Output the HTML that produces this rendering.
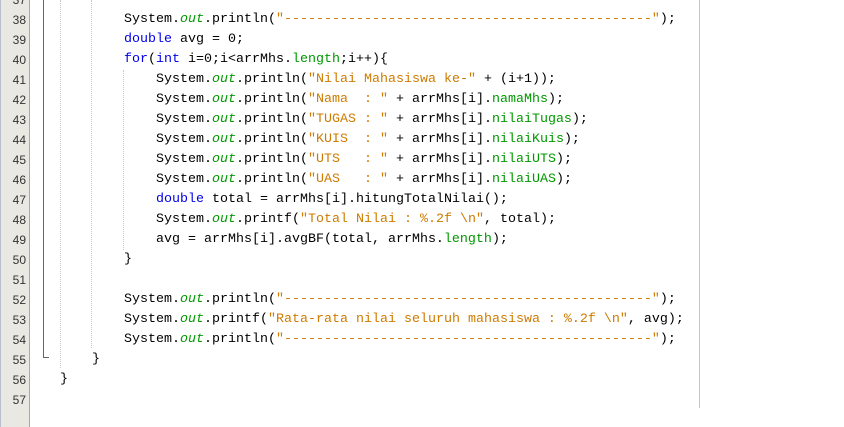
<!DOCTYPE html>
<html><head><style>
body{margin:0;width:844px;height:427px;overflow:hidden;background:#fff;position:relative;font-family:"Liberation Mono","Courier New",monospace;}
.g{position:absolute;left:0;top:0;width:30px;height:427px;background:#e9e8e2;border-left:1px solid #b8c0cc;border-right:1px solid #a9a9a9;box-sizing:border-box;}
.n{position:absolute;left:0;width:26px;text-align:right;font-family:"Liberation Sans",Arial,sans-serif;font-size:12px;color:#333;line-height:20px;}
.l{position:absolute;font-size:13.33px;line-height:20px;white-space:pre;color:#000;}
.k{color:#0000e6}.o{color:#009900;font-style:italic}.s{color:#ce7b00}.f{color:#009900}
.d{position:absolute;width:0;border-left:1px dotted #c8c8c8;}
</style></head><body>
<div class="g"></div>
<div style="position:absolute;left:43px;top:0;width:1px;height:358px;background:#666"></div>
<div style="position:absolute;left:43px;top:357px;width:6px;height:1px;background:#666"></div>
<div style="position:absolute;left:699px;top:0;width:1px;height:408px;background:#f0b4b4"></div>
<div class="d" style="left:60px;top:0;height:368px"></div>
<div class="d" style="left:91px;top:0;height:348px"></div>
<div class="d" style="left:123px;top:70px;height:180px"></div>

<div class="n" style="top:-10px">37</div>
<div class="n" style="top:10px">38</div>
<div class="n" style="top:30px">39</div>
<div class="n" style="top:50px">40</div>
<div class="n" style="top:70px">41</div>
<div class="n" style="top:90px">42</div>
<div class="n" style="top:110px">43</div>
<div class="n" style="top:130px">44</div>
<div class="n" style="top:150px">45</div>
<div class="n" style="top:170px">46</div>
<div class="n" style="top:190px">47</div>
<div class="n" style="top:210px">48</div>
<div class="n" style="top:230px">49</div>
<div class="n" style="top:250px">50</div>
<div class="n" style="top:270px">51</div>
<div class="n" style="top:290px">52</div>
<div class="n" style="top:310px">53</div>
<div class="n" style="top:330px">54</div>
<div class="n" style="top:350px">55</div>
<div class="n" style="top:370px">56</div>
<div class="n" style="top:390px">57</div>

<div class="l" style="left:124px;top:10px">System.<span class="o">out</span>.println(<span class="s">"----------------------------------------------"</span>);</div>
<div class="l" style="left:124px;top:30px"><span class="k">double</span> avg = 0;</div>
<div class="l" style="left:124px;top:50px"><span class="k">for</span>(<span class="k">int</span> i=0;i&lt;arrMhs.<span class="f">length</span>;i++){</div>
<div class="l" style="left:156px;top:70px">System.<span class="o">out</span>.println(<span class="s">"Nilai Mahasiswa ke-"</span> + (i+1));</div>
<div class="l" style="left:156px;top:90px">System.<span class="o">out</span>.println(<span class="s">"Nama  : "</span> + arrMhs[i].<span class="f">namaMhs</span>);</div>
<div class="l" style="left:156px;top:110px">System.<span class="o">out</span>.println(<span class="s">"TUGAS : "</span> + arrMhs[i].<span class="f">nilaiTugas</span>);</div>
<div class="l" style="left:156px;top:130px">System.<span class="o">out</span>.println(<span class="s">"KUIS  : "</span> + arrMhs[i].<span class="f">nilaiKuis</span>);</div>
<div class="l" style="left:156px;top:150px">System.<span class="o">out</span>.println(<span class="s">"UTS   : "</span> + arrMhs[i].<span class="f">nilaiUTS</span>);</div>
<div class="l" style="left:156px;top:170px">System.<span class="o">out</span>.println(<span class="s">"UAS   : "</span> + arrMhs[i].<span class="f">nilaiUAS</span>);</div>
<div class="l" style="left:156px;top:190px"><span class="k">double</span> total = arrMhs[i].hitungTotalNilai();</div>
<div class="l" style="left:156px;top:210px">System.<span class="o">out</span>.printf(<span class="s">"Total Nilai : %.2f \n"</span>, total);</div>
<div class="l" style="left:156px;top:230px">avg = arrMhs[i].avgBF(total, arrMhs.<span class="f">length</span>);</div>
<div class="l" style="left:124px;top:250px">}</div>
<div class="l" style="left:124px;top:290px">System.<span class="o">out</span>.println(<span class="s">"----------------------------------------------"</span>);</div>
<div class="l" style="left:124px;top:310px">System.<span class="o">out</span>.printf(<span class="s">"Rata-rata nilai seluruh mahasiswa : %.2f \n"</span>, avg);</div>
<div class="l" style="left:124px;top:330px">System.<span class="o">out</span>.println(<span class="s">"----------------------------------------------"</span>);</div>
<div class="l" style="left:92px;top:350px">}</div>
<div class="l" style="left:60px;top:370px">}</div>
</body></html>
